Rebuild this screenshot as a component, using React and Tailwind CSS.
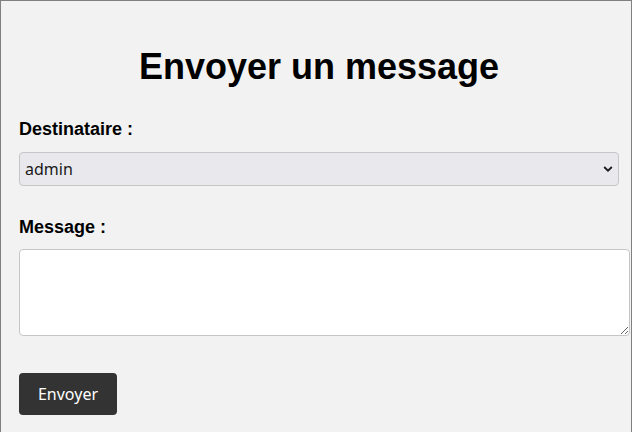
import React from 'react';

const App = () => {
  return (
    <div className="min-h-screen bg-white">
      <div className="border border-[#808080] bg-[#f2f2f2] pl-[18px] pt-[45px] pb-[18px] font-['Liberation_Sans',Arial,sans-serif] text-black">
        <div className="w-[600px]">
          <h1 className="text-center text-[36px] leading-[41px] font-bold">Envoyer un message</h1>

          <form className="flex flex-col" onSubmit={e => e.preventDefault()}>
            <label className="mt-[32px] text-[18px] leading-[21px] font-bold">Destinataire :</label>
            <div className="relative mt-[12px]">
              <select className="w-[600px] h-[34px] appearance-none bg-[#e9e9ed] border border-[#c6c6c6] rounded-[4px] pl-[5px] text-[16px] text-[#1a1a1a] font-['Noto_Sans',sans-serif] outline-none">
                <option>admin</option>
              </select>
              <svg
                className="absolute right-[6px] top-1/2 -translate-y-1/2 pointer-events-none"
                width="10" height="7" viewBox="0 0 10 7" fill="none"
              >
                <path d="M1.2 1.5 L5 5.2 L8.8 1.5" stroke="#1a1a1a" strokeWidth="1.8" />
              </svg>
            </div>

            <label className="mt-[31px] text-[18px] leading-[21px] font-bold">Message :</label>
            <textarea className="mt-[11px] w-[611px] h-[87px] bg-white border border-[#c6c6c6] rounded-[4px] p-[5px] text-[16px] font-['Noto_Sans',sans-serif] outline-none resize" />

            <button
              type="submit"
              className="mt-[37px] w-[98px] h-[42px] bg-[#333333] text-white rounded-[4px] text-[16px] font-['Noto_Sans',sans-serif] cursor-pointer"
            >
              Envoyer
            </button>
          </form>
        </div>
      </div>
    </div>
  );
};

export default App;
